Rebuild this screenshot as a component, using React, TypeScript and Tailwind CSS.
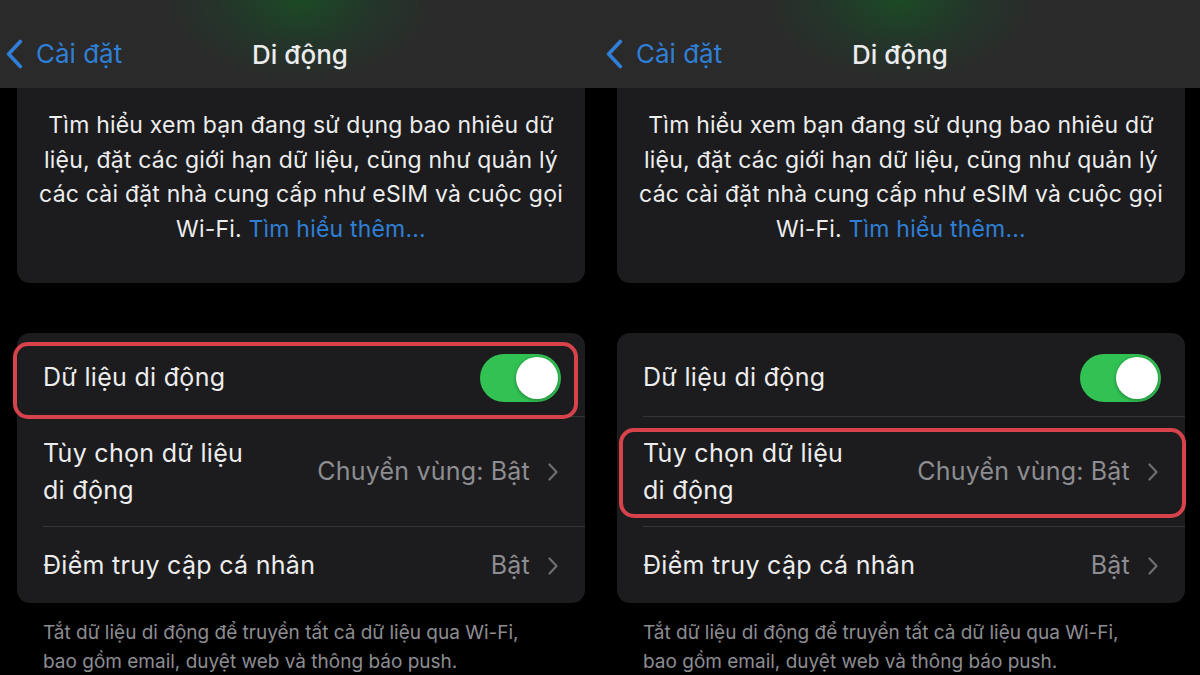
import React from "react";

// Two side-by-side iOS "Di động" settings screenshots, each with one row ringed in red.
const FONT = { fontFamily: "Inter, 'Noto Sans', 'Liberation Sans', sans-serif" };

function Chevron({ className = "", left = false }: { className?: string; left?: boolean }) {
  return (
    <svg viewBox="0 0 10 18" className={className} fill="none">
      <path
        d={left ? "M8.5 1.5 1.5 9l7 7.5" : "M1.5 1.5 8.5 9l-7 7.5"}
        stroke="currentColor"
        strokeWidth="2.2"
        strokeLinecap="round"
        strokeLinejoin="round"
      />
    </svg>
  );
}

function Toggle() {
  return (
    <div className="flex h-[48px] w-[81px] items-center justify-end rounded-full bg-[#32c254] p-[3px]">
      <div className="h-[42px] w-[42px] rounded-full bg-white shadow-[0_1px_4px_rgba(0,0,0,0.35)]" />
    </div>
  );
}

function Ring({ className }: { className: string }) {
  return <div className={`pointer-events-none absolute rounded-[15px] border-[4px] border-[#d8434b] ${className}`} />;
}

function Panel({ mark }: { mark: "data" | "options" }) {
  return (
    <div className="relative flex h-[675px] w-[600px] flex-col overflow-hidden bg-black" style={FONT}>
      {/* nav bar */}
      <div className="relative z-10 flex h-[88px] shrink-0 items-center bg-[radial-gradient(ellipse_170px_100px_at_50%_0%,#1b4a25_0%,#24352a_45%,#2a2b2a_80%,#2a2a2a_100%)] px-[6px] pt-[20px]">
        <div className="flex items-center gap-[13px] text-[#2f7fd6]">
          <Chevron left className="h-[30px] w-[17px]" />
          <span className="text-[26px] leading-none">Cài đặt</span>
        </div>
        <div className="absolute inset-x-0 bottom-[20px] text-center text-[26px] font-medium leading-none text-[#ececec]">
          Di động
        </div>
      </div>

      <div className="flex flex-col pl-[17px] pr-[15px]">
        {/* info card */}
        <div className="rounded-b-[13px] bg-[#1c1c1e] pb-[37px] pt-[20px] text-center text-[23px] leading-[34.5px] tracking-[0.2px] text-[#ededed]">
          Tìm hiểu xem bạn đang sử dụng bao nhiêu dữ
          <br />
          liệu, đặt các giới hạn dữ liệu, cũng như quản lý
          <br />
          các cài đặt nhà cung cấp như eSIM và cuộc gọi
          <br />
          Wi-Fi. <span className="text-[#2f7fd6]">Tìm hiểu thêm...</span>
        </div>

        {/* settings card */}
        <div className="mt-[50px] rounded-[13px] bg-[#1c1c1e]">
          <div className="relative flex h-[84px] items-center justify-between pl-[26px] pr-[24px] pt-[5px]">
            <span className="text-[25px] tracking-[0.3px] text-[#ededed]">Dữ liệu di động</span>
            <Toggle />
            <div className="absolute bottom-0 left-[26px] right-0 h-px bg-[#343436]" />
            {mark === "data" && <Ring className="-left-[4px] right-[7px] top-[9px] -bottom-[2px]" />}
          </div>

          <div className="relative flex h-[110px] items-center justify-between pl-[26px] pr-[27px]">
            <span className="text-[25px] leading-[37px] tracking-[0.3px] text-[#ededed]">
              Tùy chọn dữ liệu
              <br />
              di động
            </span>
            <div className="flex items-center gap-[18px] text-[#8d8d92]">
              <span className="text-[25px] tracking-[0.2px]">Chuyển vùng: Bật</span>
              <Chevron className="h-[18px] w-[10px] text-[#6e6e73]" />
            </div>
            <div className="absolute bottom-0 left-[26px] right-0 h-px bg-[#343436]" />
            {mark === "options" && <Ring className="left-[2px] -right-[1px] top-[11px] bottom-[9px]" />}
          </div>

          <div className="flex h-[76px] items-center justify-between pl-[26px] pr-[27px] pt-[2px]">
            <span className="text-[25px] tracking-[0.3px] text-[#ededed]">Điểm truy cập cá nhân</span>
            <div className="flex items-center gap-[18px] text-[#8d8d92]">
              <span className="text-[25px] tracking-[0.2px]">Bật</span>
              <Chevron className="h-[18px] w-[10px] text-[#6e6e73]" />
            </div>
          </div>
        </div>

        <p className="mt-[15px] px-[26px] text-[19px] leading-[29px] text-[#8d8d92]">
          Tắt dữ liệu di động để truyền tất cả dữ liệu qua Wi-Fi,
          <br />
          bao gồm email, duyệt web và thông báo push.
        </p>
      </div>
    </div>
  );
}

export default function App() {
  return (
    <div className="flex h-[675px] w-[1200px] bg-black">
      <Panel mark="data" />
      <Panel mark="options" />
    </div>
  );
}
